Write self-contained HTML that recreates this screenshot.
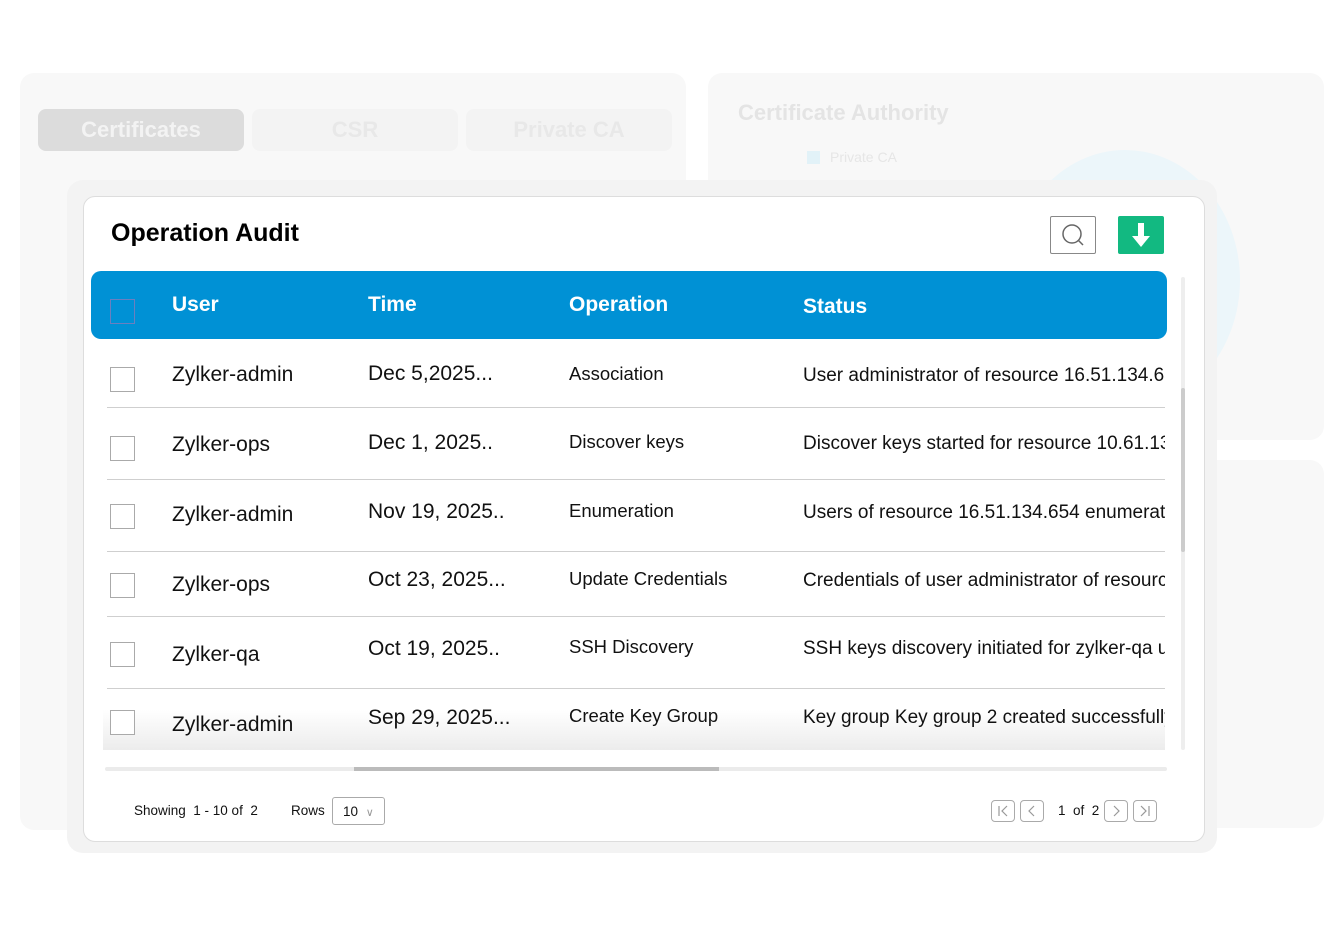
<!DOCTYPE html>
<html><head><meta charset="utf-8"><style>
*{margin:0;padding:0;box-sizing:border-box}
body{width:1344px;height:930px;background:#fff;position:relative;overflow:hidden;font-family:"Liberation Sans",sans-serif;color:#111}
.a{position:absolute}
.bgp{position:absolute;background:#f8f8f8;border-radius:14px}
.t{position:absolute;white-space:nowrap}
.u{font-size:21px}
.r{font-size:18.5px}
.s{font-size:19px}
.cb{position:absolute;left:110px;width:25px;height:25px;border:1px solid #aaa;background:#fff}
.sep{position:absolute;left:107px;width:1058px;height:1px;background:#cfcfcf}
.pb{position:absolute;top:800px;width:24px;height:22px;border:1px solid #aaa;border-radius:4px}
</style></head><body>
<div class="bgp" style="left:20px;top:73px;width:666px;height:757px"></div>
<div class="bgp" style="left:708px;top:73px;width:616px;height:367px"></div>
<div class="bgp" style="left:708px;top:460px;width:616px;height:368px"></div>
<div class="a" style="left:38px;top:109px;width:206px;height:42px;background:#dcdcdc;border-radius:8px;color:#f3f3f3;font-size:22px;font-weight:bold;text-align:center;line-height:42px">Certificates</div>
<div class="a" style="left:252px;top:109px;width:206px;height:42px;background:#f3f3f3;border-radius:8px;color:#e8e8e8;font-size:22px;font-weight:bold;text-align:center;line-height:42px">CSR</div>
<div class="a" style="left:466px;top:109px;width:206px;height:42px;background:#f3f3f3;border-radius:8px;color:#e8e8e8;font-size:22px;font-weight:bold;text-align:center;line-height:42px">Private CA</div>
<div class="t" style="left:738px;top:100px;font-size:22px;font-weight:bold;color:#e4e4e4">Certificate Authority</div>
<div class="a" style="left:807px;top:151px;width:13px;height:13px;background:#e2f2f8"></div>
<div class="t" style="left:830px;top:149px;font-size:14px;color:#e6e6e6">Private CA</div>
<div class="a" style="left:1010px;top:150px;width:230px;height:260px;border-radius:50%;background:#ecf6fa"></div>
<div class="a" style="left:67px;top:180px;width:1150px;height:673px;background:#f3f3f3;border-radius:16px"></div>
<div class="a" style="left:83px;top:196px;width:1122px;height:646px;background:#fff;border:1px solid #ddd;border-radius:12px"></div>
<div class="t" style="left:111px;top:219px;font-size:25px;font-weight:bold;color:#000">Operation Audit</div>
<div class="a" style="left:1050px;top:216px;width:46px;height:38px;border:1.5px solid #888;border-radius:2px;background:#fff">
<svg width="44" height="36"><circle cx="21" cy="17" r="9" fill="none" stroke="#666" stroke-width="1.5"/><line x1="27.5" y1="23.5" x2="32" y2="28" stroke="#666" stroke-width="1.5"/></svg></div>
<div class="a" style="left:1118px;top:216px;width:46px;height:38px;background:#12b981;border-radius:2px">
<svg width="46" height="38"><path d="M20 7h6v13h6l-9 11-9-11h6z" fill="#fff"/></svg></div>
<div class="a" style="left:91px;top:271px;width:1076px;height:68px;background:#0091d5;border-radius:10px"></div>
<div class="a" style="left:110px;top:299px;width:25px;height:25px;border:1px solid #6b7fbf"></div>
<div class="t" style="left:172px;top:293px;font-size:21px;font-weight:bold;color:#fff">User</div>
<div class="t" style="left:368px;top:293px;font-size:21px;font-weight:bold;color:#fff">Time</div>
<div class="t" style="left:569px;top:293px;font-size:21px;font-weight:bold;color:#fff">Operation</div>
<div class="t" style="left:803px;top:295px;font-size:21px;font-weight:bold;color:#fff">Status</div>
<div class="a" style="left:103px;top:340px;width:1062px;height:410px;overflow:hidden">
<div class="a" style="left:0;top:370px;width:1062px;height:40px;background:linear-gradient(#fff,#ececec)"></div>
</div>
<div class="sep" style="top:407px"></div><div class="sep" style="top:479px"></div><div class="sep" style="top:551px"></div><div class="sep" style="top:616px"></div><div class="sep" style="top:688px"></div>
<div class="cb" style="top:367px"></div><div class="cb" style="top:436px"></div><div class="cb" style="top:504px"></div><div class="cb" style="top:573px"></div><div class="cb" style="top:642px"></div><div class="cb" style="top:710px"></div>
<div class="t u" style="left:172px;top:363px">Zylker-admin</div>
<div class="t u" style="left:172px;top:433px">Zylker-ops</div>
<div class="t u" style="left:172px;top:503px">Zylker-admin</div>
<div class="t u" style="left:172px;top:573px">Zylker-ops</div>
<div class="t u" style="left:172px;top:643px">Zylker-qa</div>
<div class="t u" style="left:172px;top:713px">Zylker-admin</div>
<div class="t u" style="left:368px;top:362px">Dec 5,2025...</div>
<div class="t u" style="left:368px;top:431px">Dec 1, 2025..</div>
<div class="t u" style="left:368px;top:500px">Nov 19, 2025..</div>
<div class="t u" style="left:368px;top:568px">Oct 23, 2025...</div>
<div class="t u" style="left:368px;top:637px">Oct 19, 2025..</div>
<div class="t u" style="left:368px;top:706px">Sep 29, 2025...</div>
<div class="t r" style="left:569px;top:363px">Association</div>
<div class="t r" style="left:569px;top:431px">Discover keys</div>
<div class="t r" style="left:569px;top:500px">Enumeration</div>
<div class="t r" style="left:569px;top:568px">Update Credentials</div>
<div class="t r" style="left:569px;top:636px">SSH Discovery</div>
<div class="t r" style="left:569px;top:705px">Create Key Group</div>
<div class="a" style="left:803px;top:360px;width:362px;height:390px;overflow:hidden">
<div class="t s" style="left:0;top:5px">User administrator of resource 16.51.134.654</div>
<div class="t s" style="left:0;top:73px">Discover keys started for resource 10.61.134</div>
<div class="t s" style="left:0;top:142px">Users of resource 16.51.134.654 enumerated</div>
<div class="t s" style="left:0;top:210px">Credentials of user administrator of resource</div>
<div class="t s" style="left:0;top:278px">SSH keys discovery initiated for zylker-qa user</div>
<div class="t s" style="left:0;top:347px">Key group Key group 2 created successfully</div>
</div>
<div class="a" style="left:1181px;top:277px;width:4px;height:473px;background:#eee;border-radius:2px"></div>
<div class="a" style="left:1181px;top:388px;width:4px;height:164px;background:#ccc;border-radius:2px"></div>
<div class="a" style="left:105px;top:767px;width:1062px;height:4px;background:#ebebeb;border-radius:2px"></div>
<div class="a" style="left:354px;top:767px;width:365px;height:4px;background:#bbb"></div>
<div class="t" style="left:134px;top:803px;font-size:13.5px">Showing &nbsp;1 - 10 of &nbsp;2</div>
<div class="t" style="left:291px;top:803px;font-size:13.5px">Rows</div>
<div class="a" style="left:332px;top:797px;width:53px;height:28px;border:1px solid #aaa;border-radius:3px;font-size:13.5px;padding:6px 0 0 10px">10 <span style="color:#999;font-size:11px;margin-left:4px">&#8744;</span></div>
<div class="pb" style="left:991px"><svg width="22" height="20"><path d="M7 5v10M15 5l-5 5 5 5" fill="none" stroke="#999" stroke-width="1.2"/></svg></div>
<div class="pb" style="left:1020px"><svg width="22" height="20"><path d="M13 5l-5 5 5 5" fill="none" stroke="#999" stroke-width="1.2"/></svg></div>
<div class="t" style="left:1058px;top:803px;font-size:13.5px">1 &nbsp;of &nbsp;2</div>
<div class="pb" style="left:1104px"><svg width="22" height="20"><path d="M9 5l5 5-5 5" fill="none" stroke="#999" stroke-width="1.2"/></svg></div>
<div class="pb" style="left:1133px"><svg width="22" height="20"><path d="M7 5l5 5-5 5M15 5v10" fill="none" stroke="#999" stroke-width="1.2"/></svg></div>
</body></html>
